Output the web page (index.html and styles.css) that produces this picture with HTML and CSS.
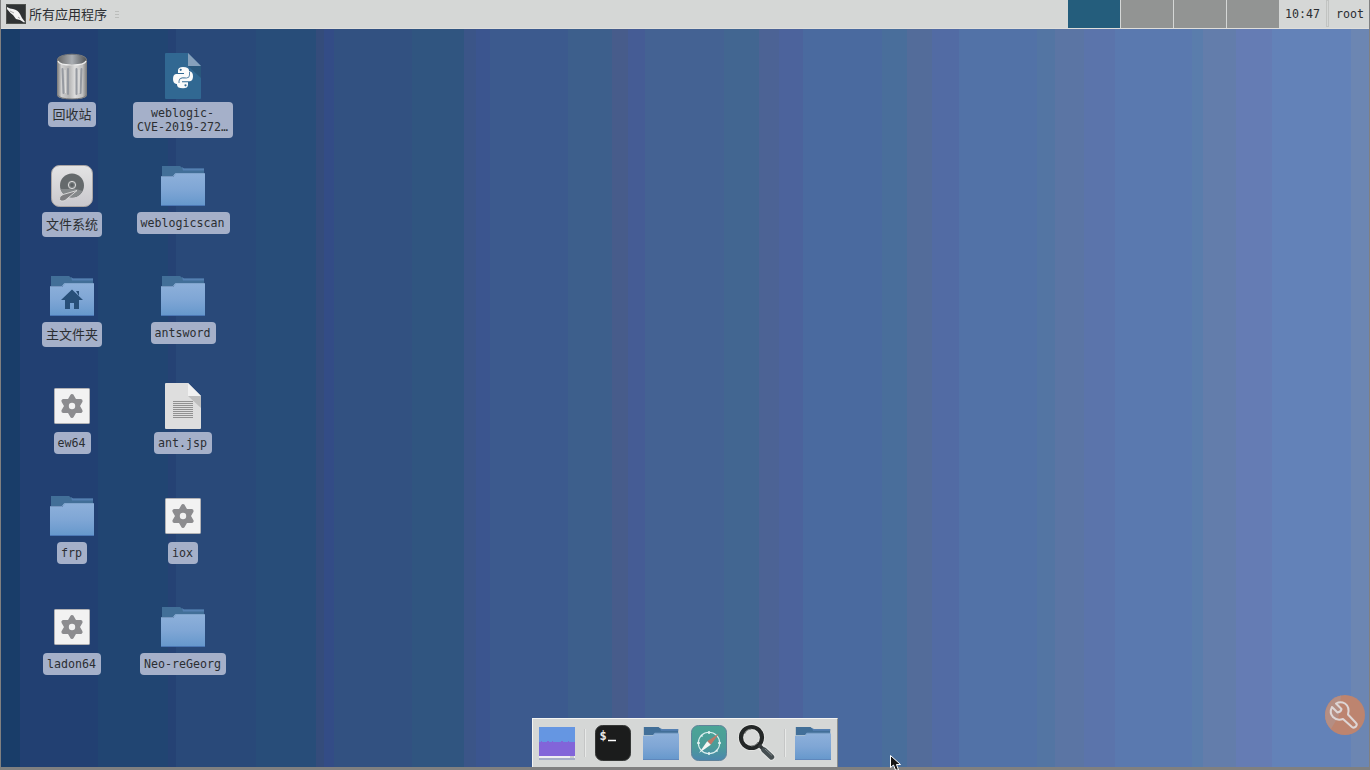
FILE: index.html
```html
<!DOCTYPE html>
<html lang="zh-CN">
<head>
<meta charset="utf-8">
<title>Desktop</title>
<link rel="stylesheet" href="styles.css">
</head>
<body>
<svg class="defs" width="0" height="0" aria-hidden="true">
  <defs>
    <linearGradient id="gFolder" x1="0" y1="0" x2="0" y2="1"><stop offset="0" stop-color="#8db0da"/><stop offset=".5" stop-color="#7fa6d5"/><stop offset="1" stop-color="#6698cc"/></linearGradient>
    <linearGradient id="gMetal"><stop offset="0" stop-color="#777"/><stop offset=".15" stop-color="#d0d0d0"/><stop offset=".4" stop-color="#b4b4b4"/><stop offset=".6" stop-color="#ddd"/><stop offset=".85" stop-color="#c0c0c0"/><stop offset="1" stop-color="#777"/></linearGradient>
    <linearGradient id="gInside"><stop offset="0" stop-color="#666"/><stop offset=".5" stop-color="#a9adb2"/><stop offset="1" stop-color="#505356"/></linearGradient>
    <linearGradient id="gDisk" x1="0" y1="0" x2="0" y2="1"><stop offset="0" stop-color="#e4e4e4"/><stop offset="1" stop-color="#c9c8cd"/></linearGradient>
    <linearGradient id="gSafari" x1="0" y1="0" x2="0" y2="1"><stop offset="0" stop-color="#4ba496"/><stop offset=".6" stop-color="#4b9c99"/><stop offset="1" stop-color="#4c86ae"/></linearGradient>
    <symbol id="folder" viewBox="0 0 48 48">
      <path d="M3 14V4h18l3 2.500h21V14z" fill="#426f98"/>
      <path d="M23 5l2 1.500h20v2H24z" fill="#5580b2"/>
      <path d="M2 15h12l2.500-3H46v31.500H2z" fill="url(#gFolder)"/>
      <path d="M2 14.500h12l2.300-3H46" fill="none" stroke="#9bbce2" stroke-width=".7"/>
      <path d="M2 43.500h44" stroke="#4b77b4"/>
    </symbol>
    <symbol id="gear" viewBox="0 0 48 48">
      <rect x="6.500" y="6.500" width="35" height="35" rx=".8" fill="#f2f2f2" stroke="#b2b2b5"/>
      <path d="M24 14l2.900 5 5.800 0-2.900 5 2.900 5-5.800 0-2.900 5-2.900-5-5.800 0 2.900-5-2.900-5 5.800 0z" fill="#8c8c8f" stroke="#8c8c8f" stroke-width="3.800" stroke-linejoin="round"/>
      <circle cx="24" cy="24" r="3.200" fill="#f2f2f2"/>
    </symbol>
  </defs>
</svg>
<div class="screen">
  <header class="panel">
    <div class="menu">
      <svg width="20" height="20" viewBox="0 0 20 20"><rect x=".5" y=".5" width="19" height="19" fill="#303334" stroke="#50534f"/><path d="M1 3q3 2 6 2 5 1 7 5l2 4 3 4-1 .5-4-2.500-4-1-3-4Q4 9 1 5z" fill="#f4f4f4"/><path d="M4 7l4 2M12 13l2 1.500" stroke="#777" stroke-width=".6"/></svg>
      <span class="menu-text">所有应用程序</span>
      <span class="grip"></span>
    </div>
    <div class="pager"><i class="active"></i><i></i><i></i><i></i></div>
    <span class="clock">10:47</span>
    <span class="handle"></span>
    <span class="user">root</span>
  </header>

  <main class="icons">
    <div class="item"><svg viewBox="0 0 48 48"><path d="M9 7v36q0 4 15 4t15-4V7z" fill="url(#gMetal)"/><path d="M14.500 17l1 24M20 17v25M28.500 17v25M33.500 17l-1 24" stroke="#969aa1" stroke-width="2" stroke-linecap="round"/><path d="M17 18l.5 23M31 18v23" stroke="#e0e0e0"/><ellipse cx="24" cy="7.500" rx="14.500" ry="5.300" fill="url(#gInside)" stroke="#77797b"/><path d="M10 9q1 4 14 4t14-4" fill="none" stroke="#ededed" stroke-width="1.200"/><path d="M9.500 43q2 4 14.500 4t14.500-4" fill="none" stroke="#777"/></svg><span class="label cjk">回收站</span></div>
    <div class="item"><svg viewBox="0 0 48 48"><rect x="3.500" y="3.500" width="41" height="41" rx="8" fill="url(#gDisk)" stroke="#aaa5a5"/><circle cx="24" cy="23.500" r="12" fill="#656a6c"/><path d="M12.500 27a12 12 0 0 0 22 2l-6-2z" fill="#85898b"/><circle cx="24" cy="23" r="4.500" fill="#777c7e"/><circle cx="24" cy="23" r="3.600" fill="none" stroke="#dcdcdc" stroke-width="1"/><circle cx="24" cy="23" r="1.700" fill="#5b6062"/><path d="M29 28.500L15 32.500q-4.500 2-3.500 4.800t5.500 1.200z" fill="#7e7e81" stroke="#dedede" stroke-width=".9"/></svg><span class="label cjk">文件系统</span></div>
    <div class="item"><svg viewBox="0 0 48 48"><use href="#folder"/><path d="M24 17.500l11 10.500H31v9h-5V31h-4v6h-5v-9h-4z" fill="#284f78"/><path d="M28 19h3v5z" fill="#284f78"/></svg><span class="label cjk">主文件夹</span></div>
    <div class="item"><svg><use href="#gear"/></svg><span class="label">ew64</span></div>
    <div class="item"><svg><use href="#folder"/></svg><span class="label">frp</span></div>
    <div class="item last"><svg><use href="#gear"/></svg><span class="label">ladon64</span></div>

    <div class="item"><svg viewBox="0 0 48 48"><path d="M7 1h22l13 13v32q0 1-1 1H7q-1 0-1-1V2q0-1 1-1z" fill="#316892"/><path d="M29 14h13v12z" fill="#29577c"/><path d="M29 1l13 13H29z" fill="#86a0bb"/><g fill="#fafafa"><path id="snake" d="M24 15q-5 0-5 3.500V21h6v1h-8q-3 .5-3 5t3.500 5H20v-3q0-3.500 3.500-3.500h4q2.500 0 2.500-2.500v-4.500Q30 15 24 15z"/><use href="#snake" transform="rotate(180 24 25.600)"/></g><circle cx="21.700" cy="17.800" r="1.100" fill="#316892"/><circle cx="26.500" cy="33.300" r="1.100" fill="#316892"/><path d="M20 31v-2q0-3 3.500-3h4q3 0 3-3v-3" fill="none" stroke="#316892" stroke-width=".8"/></svg><span class="label">weblogic-<br>CVE-2019-272…</span></div>
    <div class="item"><svg><use href="#folder"/></svg><span class="label">weblogicscan</span></div>
    <div class="item"><svg><use href="#folder"/></svg><span class="label">antsword</span></div>
    <div class="item"><svg viewBox="0 0 48 48"><path d="M7 1h22l13 13v32q0 1-1 1H7q-1 0-1-1V2q0-1 1-1z" fill="#dedede"/><path d="M29 14h13v12z" fill="#bebebe"/><path d="M29 1l13 13H29z" fill="#f1f1f1"/><path d="M14 19.500h20m-20 2h20m-20 2h20m-20 2h20m-20 2h20m-20 2h20m-20 2h20m-20 2h20m-20 2h20" stroke="#919191"/></svg><span class="label">ant.jsp</span></div>
    <div class="item"><svg><use href="#gear"/></svg><span class="label">iox</span></div>
    <div class="item last"><svg><use href="#folder"/></svg><span class="label">Neo-reGeorg</span></div>
  </main>

  <nav class="dock">
    <svg class="show" viewBox="0 0 36 33"><path fill="#6596e2" d="M0 0h36v15H0z"/><path fill="#8265d9" d="M0 15h36v14H0z"/><path d="M2 14.500h1M8 14.500h2M13 14.500h1M22 14.500h2M29 14.500h1" stroke="#8265d9"/><path fill="#eeeef2" d="M0 29h36v2H0z"/><path fill="#a6aec8" d="M0 31h36v2H0z"/><path d="M31 30h4" stroke="#aaa"/></svg>
    <i class="sep"></i>
    <svg class="app" viewBox="0 0 36 36"><rect x=".5" y=".5" width="35" height="35" rx="7" fill="#1b1c1c" stroke="#353736"/><text class="prompt" x="4.500" y="14.500">$</text><path d="M13 15.500h8" stroke="#fff" stroke-width="1.500"/></svg>
    <svg class="dock-folder" viewBox="2 4 44 40" preserveAspectRatio="none"><use href="#folder" width="48" height="48"/></svg>
    <svg class="app" viewBox="0 0 36 36"><rect x=".5" y=".5" width="35" height="35" rx="7" fill="url(#gSafari)" stroke="#62839a"/><circle cx="18" cy="18" r="10.700" fill="none" stroke="#d9eeee" stroke-width="1.100"/><path d="M18 6v3m0 18v3M6 18h3m18 0h3M10 10l1.500 1.500M25 25l1.500 1.500" stroke="#e9f4f4" stroke-width="1.500"/><path d="M28 8.500L19.800 19.800l-3.600-3.600z" fill="#bd7866"/><path d="M8 28l8.200-11.800 3.600 3.600z" fill="#f6f6f4"/></svg>
    <svg class="search" viewBox="0 0 38 38"><path d="M24 24l9.500 9" stroke="#e2e3e2" stroke-width="7.500" stroke-linecap="round"/><circle cx="13.500" cy="13.500" r="10.500" fill="#d9dad9" stroke="#e4e5e3" stroke-width="6"/><circle cx="13.500" cy="13.500" r="10.500" fill="none" stroke="#242727" stroke-width="4.200"/><path d="M6.500 10a8 8 0 0 1 7-5M20 18a8 8 0 0 1-7 4" fill="none" stroke="#777a79" stroke-width="1"/><path d="M21 21l5 5" stroke="#34383a" stroke-width="3.500"/><path d="M26 26l7.500 7" stroke="#454e51" stroke-width="5.400" stroke-linecap="round"/><path d="M27 25l7 6.500" stroke="#7c8587" stroke-width="1"/></svg>
    <i class="sep"></i>
    <svg class="dock-folder" viewBox="2 4 44 40" preserveAspectRatio="none"><use href="#folder" width="48" height="48"/></svg>
  </nav>

  <svg class="tool" width="40" height="40" viewBox="0 0 40 40"><circle cx="20" cy="20" r="20" fill="#bd846f"/><path d="M6 34A20 20 0 0 1 16 .4l-2 20z" fill="#b58e83"/><path d="M11 8.500l5.500 5.500q-.5 3-4 3.500L7 12Q4 18 8 22q4 4 10 2l9 8q2 1.500 4-.5 1.500-2 0-3.500l-8-8.500Q25 12 20 8.500 15.500 6 11 8.500z" fill="none" stroke="#ded6d5" stroke-width="2" stroke-linejoin="round"/></svg>
  <svg class="pointer" width="11" height="15" viewBox="0 0 11 15"><path d="M.5.500v12l3-2.500 2 5h3l-2-5.500h4z" fill="#151515" stroke="#fff"/></svg>
</div>
</body>
</html>
```
FILE: styles.css
```css
* { box-sizing: border-box; }
body { margin: 0; overflow: hidden; }
.defs { position: absolute; }
.screen {
  position: relative;
  width: 1370px;
  height: 770px;
  display: flex;
  flex-direction: column;
  border: solid #808080;
  border-width: 0 1px 3px;
  font: 11.630px/14px "DejaVu Sans Mono", "Noto Sans CJK SC", monospace;
  color: #2b2e32;
  background: linear-gradient(90deg,
    #193d69 0 20px, #224072 20px 98px, #214572 98px 168px, #254274 168px 176px,
    #294979 176px 256px, #284d79 256px 316px, #344c7b 316px 324px, #334c86 324px 334px,
    #325181 334px 412px, #305580 412px 464px, #3b5588 464px 476px, #3b558f 476px 490px,
    #3c5a8e 490px 568px, #3d5f8c 568px 612px, #475c8b 612px 628px, #455c95 628px 645px,
    #446293 645px 724px, #426691 724px 759px, #4c6395 759px 779px, #4c639c 779px 803px,
    #4a6a9f 803px 882px, #496e9b 882px 907px, #536c9a 907px 932px, #526ba4 932px 959px,
    #5272a7 959px 1037px, #5375a3 1037px 1055px, #5b75a4 1055px 1084px, #5b74ab 1084px 1115px,
    #5a79af 1115px 1192px, #5a7dac 1192px 1203px, #637dab 1203px 1236px, #657cb4 1236px 1272px,
    #6382b8 1272px 1351px, #6c86b2 1351px);
  background-origin: border-box;
}
.panel {
  display: flex;
  flex: 0 0 29px;
  background: #d5d7d6;
  border-bottom: 1px solid #dfdedb;
}
.menu { display: flex; align-items: flex-start; padding: 4px 0 0 5px; flex: 1; }
.menu-text { margin-left: 3px; font: 13px/20px "Noto Sans CJK SC", sans-serif; }
.grip { width: 4px; height: 7px; margin: 7px 0 0 8px; background: repeating-linear-gradient(#bbbdbb 0 1px, transparent 1px 3px); }
.pager { display: flex; gap: 1px; height: 28px; }
.pager i { width: 52px; background: #929493; }
.pager .active { background: #245d7c; }
.clock { width: 47px; padding: 7px 0 0 6px; }
.handle { width: 3px; height: 27px; border: 1px solid #c1c3c1; }
.user { width: 40px; padding: 7px 0 0 7px; }

.icons {
  flex: 1;
  align-self: flex-start;
  display: grid;
  grid-template: repeat(6, 110px) / repeat(2, 111px);
  grid-auto-flow: column;
  padding: 23px 0 0 15px;
}
.item { display: flex; flex-direction: column; align-items: center; }
.item svg { width: 48px; height: 48px; flex: none; }
.last { padding-top: 1px; }
.label {
  margin: 2px 0 0 1px;
  padding: 4px 5px 4px 4px;
  border-radius: 4px;
  background: #a5b0c9;
  text-align: center;
  white-space: nowrap;
}
.label.cjk { padding: 3px 4px 5px; font: 13px/17px "Noto Sans CJK SC", sans-serif; }

.dock {
  position: absolute;
  left: 531px;
  top: 718px;
  width: 306px;
  height: 49px;
  display: flex;
  align-items: center;
  padding: 0 5px 0 6px;
  background: #d5d7d6;
  border: solid #f4f4f2;
  border-width: 1px 0 0 1px;
  border-right: 1px solid #8d8f8d;
}
.dock svg { flex: none; }
.show { width: 36px; height: 33px; }
.sep { width: 2px; height: 28px; margin: 0 9px 0 9px; background: linear-gradient(90deg, #c5c6c6 50%, #e8e9e8 50%); }
.app { width: 36px; height: 36px; }
.dock-folder { width: 36px; height: 33px; margin: 0 12px; }
.search { width: 38px; height: 38px; margin: 0 -1px 0 11px; }
.dock-folder:last-child { margin: 0; }
.prompt { font: bold 12px "DejaVu Sans Mono", monospace; fill: #e8e8e8; }
.tool { position: absolute; left: 1324px; top: 695px; }
.pointer { position: absolute; left: 889px; top: 755px; }
```
